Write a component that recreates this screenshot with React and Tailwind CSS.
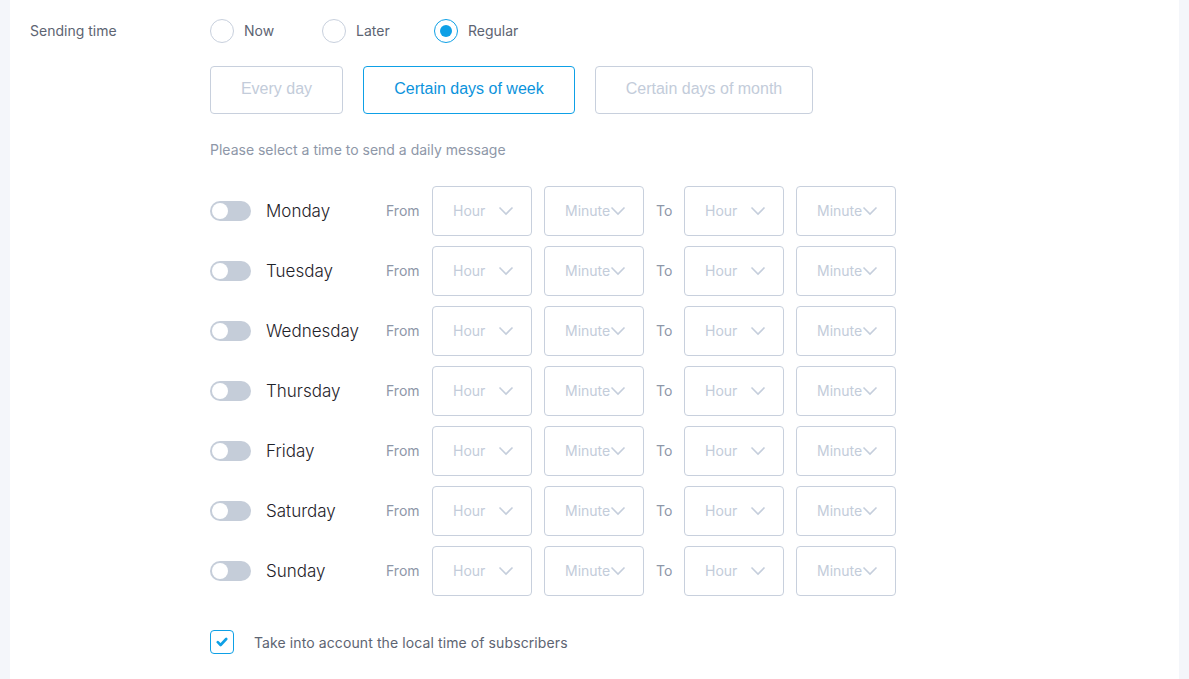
import { useState } from 'react';

const days = ['Monday', 'Tuesday', 'Wednesday', 'Thursday', 'Friday', 'Saturday', 'Sunday'];

const Chevron = () => (
  <svg viewBox="0 0 16 10" className="w-4 h-[10px] shrink-0" fill="none" stroke="#c5cedc" strokeWidth="1.6">
    <path d="M1.5 1.5 L8 8 L14.5 1.5" />
  </svg>
);

const Select = ({ label }) => (
  <div className="w-[100px] h-[50px] border border-[#c8d0dd] rounded-[4px] flex items-center justify-between pl-[20px] pr-[17px] text-[14px] text-[#c3ccda]">
    <span className="-mt-[2px]">{label}</span>
    <Chevron />
  </div>
);

const Radio = ({ label, checked }) => (
  <label className="flex items-center gap-[10px] cursor-pointer">
    <span
      className={
        checked
          ? 'w-6 h-6 rounded-full border border-[#0ea0e6] flex items-center justify-center'
          : 'w-6 h-6 rounded-full border border-[#c8d0dd]'
      }
    >
      {checked && <span className="w-[12px] h-[12px] rounded-full bg-[#0ea0e6]" />}
    </span>
    <span className="-mt-[2px] text-[14px] text-[#5d6472]">{label}</span>
  </label>
);

const Toggle = () => (
  <div className="w-[41px] h-[20px] rounded-full bg-[#c5cdd9] flex items-center px-[2px] shrink-0">
    <span className="w-4 h-4 rounded-full bg-white" />
  </div>
);

export default function App() {
  const [mode] = useState('week');

  return (
    <div className="h-[679px] bg-[#f4f6fa] px-[10px] overflow-hidden" style={{ fontFamily: 'Inter, "Noto Sans", sans-serif' }}>
      <div className="h-full bg-white pl-[20px] pt-[19px]">
        <div className="flex items-center h-6">
          <div className="-mt-[2px] w-[180px] text-[14px] text-[#5d6472]">Sending time</div>
          <div className="flex items-center gap-[22px]">
            <div className="w-[90px]"><Radio label="Now" /></div>
            <div className="w-[90px]"><Radio label="Later" /></div>
            <Radio label="Regular" checked />
          </div>
        </div>

        <div className="ml-[180px]">
          <div className="flex gap-5 mt-[23px]" style={{ fontFamily: '"Liberation Sans", Arial, sans-serif' }}>
            <button className="w-[133px] h-12 pb-[2px] border border-[#c8d0dd] rounded-[4px] text-[16px] text-[#c3ccda]">Every day</button>
            <button className={mode === 'week' ? 'w-[212px] h-12 pb-[2px] border border-[#0ea0e6] rounded-[4px] text-[16px] text-[#0b93dc]' : 'w-[212px] h-12 pb-[2px] border border-[#c8d0dd] rounded-[4px] text-[16px] text-[#c3ccda]'}>
              Certain days of week
            </button>
            <button className="w-[218px] h-12 pb-[2px] border border-[#c8d0dd] rounded-[4px] text-[16px] text-[#c3ccda]">Certain days of month</button>
          </div>

          <p className="mt-[26px] h-5 leading-5 text-[14px] text-[#8e97a8]">Please select a time to send a daily message</p>

          <div className="mt-[26px] flex flex-col gap-[10px]">
            {days.map((day) => (
              <div key={day} className="flex items-center h-[50px]">
                <Toggle />
                <span className="mt-[2px] ml-[15px] w-[120px] text-[17px] font-light text-[#1f232a]">{day}</span>
                <span className="-mt-[2px] w-[46px] text-[14px] text-[#8e97a8]">From</span>
                <Select label="Hour" />
                <div className="ml-3"><Select label="Minute" /></div>
                <span className="-mt-[2px] w-10 pl-3 text-[14px] text-[#8e97a8]">To</span>
                <Select label="Hour" />
                <div className="ml-3"><Select label="Minute" /></div>
              </div>
            ))}
          </div>

          <div className="mt-[34px] flex items-center gap-5">
            <span className="w-6 h-6 rounded-[4px] border border-[#0ea0e6] flex items-center justify-center">
              <svg viewBox="0 0 12 10" className="w-[12px] h-[10px]" fill="none" stroke="#0ea0e6" strokeWidth="2.6" strokeLinecap="round" strokeLinejoin="round">
                <path d="M1.8 5.2 L4.6 8 L10.2 2" />
              </svg>
            </span>
            <span className="text-[14px] text-[#5d6472] tracking-[0.1px]">Take into account the local time of subscribers</span>
          </div>
        </div>
      </div>
    </div>
  );
}
